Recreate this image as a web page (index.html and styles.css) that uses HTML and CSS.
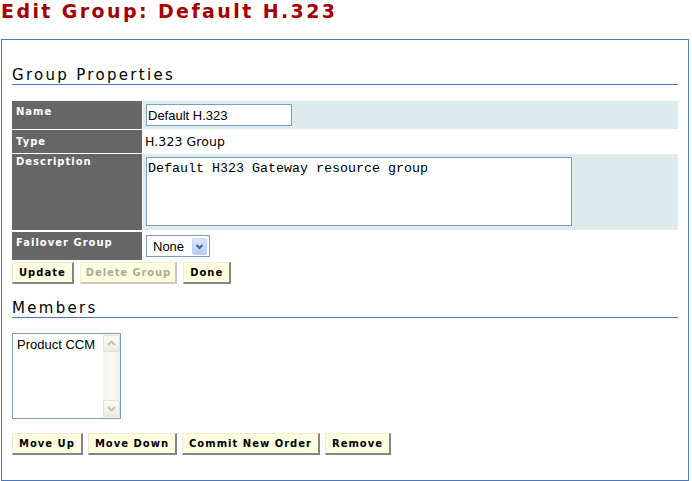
FILE: index.html
```html
<!DOCTYPE html>
<html>
<head>
<meta charset="utf-8">
<title>Edit Group</title>
<link rel="stylesheet" href="styles.css">
</head>
<body>
<h1 class="page-title">Edit Group: Default H.323</h1>
<div class="panel">
  <h2 class="section-title">Group Properties</h2>
  <div class="props">
    <div class="label l-name">Name</div>
    <div class="value tint v-name"><input class="text-input" type="text" value="Default H.323"></div>
    <div class="label l-type">Type</div>
    <div class="value v-type">H.323 Group</div>
    <div class="label l-desc">Description</div>
    <div class="value tint v-desc"><textarea class="desc-area">Default H323 Gateway resource group</textarea></div>
    <div class="label l-fail">Failover Group</div>
    <div class="value v-fail">
      <div class="dropdown">
        <span class="dropdown-text">None</span>
        <span class="drop-btn"><svg width="15" height="17" viewBox="0 0 15 17"><path d="M4.5 7 L7.5 10 L10.5 7" stroke="#4d6185" stroke-width="2" fill="none"/></svg></span>
      </div>
    </div>
  </div>
  <div class="btn-row top-btns">
    <button class="btn">Update</button>
    <button class="btn btn-disabled">Delete Group</button>
    <button class="btn">Done</button>
  </div>
  <h2 class="section-title members-title">Members</h2>
  <div class="listbox">
    <div class="list-items">
      <div class="list-item">Product CCM</div>
    </div>
    <div class="scrollbar">
      <div class="sb-btn"><svg width="15" height="15" viewBox="0 0 15 15"><path d="M4 9 L7.5 5.5 L11 9" stroke="#c6c5bb" stroke-width="2" fill="none"/></svg></div>
      <div class="sb-track"></div>
      <div class="sb-btn"><svg width="15" height="15" viewBox="0 0 15 15"><path d="M4 6 L7.5 9.5 L11 6" stroke="#c6c5bb" stroke-width="2" fill="none"/></svg></div>
    </div>
  </div>
  <div class="btn-row bottom-btns">
    <button class="btn">Move Up</button>
    <button class="btn">Move Down</button>
    <button class="btn">Commit New Order</button>
    <button class="btn">Remove</button>
  </div>
</div>
</body>
</html>
```
FILE: styles.css
```css
html, body {
  margin: 0;
  padding: 0;
  background: #ffffff;
}
body {
  font-family: "DejaVu Sans", Verdana, sans-serif;
  color: #000;
}
.page-title {
  margin: 0 0 17px 0;
  padding-left: 1px;
  font-family: "DejaVu Sans", Verdana, sans-serif;
  font-weight: bold;
  font-size: 19px;
  line-height: 22px;
  letter-spacing: 2.4px;
  color: #a50000;
}
.panel {
  box-sizing: border-box;
  width: 688px;
  margin-left: 1px;
  border: 1px solid #4a78bc;
  padding: 0 10px 25px 10px;
}
.section-title {
  margin: 26px 0 16px 0;
  font-weight: normal;
  font-size: 15px;
  line-height: 18px;
  letter-spacing: 2.3px;
  border-bottom: 1px solid #4a78bc;
  color: #000;
}
.members-title {
  margin: 15px 0 15px 0;
}
.props {
  display: grid;
  grid-template-columns: 130px 1fr;
  column-gap: 1px;
  row-gap: 1px;
}
.label {
  background: #666666;
  color: #ffffff;
  font-weight: bold;
  font-size: 10px;
  line-height: 12px;
  letter-spacing: 1px;
  padding-left: 4px;
}
.l-name { padding-top: 5px; }
.l-type { padding-top: 6px; }
.l-desc { padding-top: 2px; }
.l-fail { padding-top: 5px; margin-top: 1px; }
.value {
  padding-left: 3px;
}
.tint {
  background: #dcecec;
}
.v-name {
  padding-top: 3px;
  padding-bottom: 3px;
}
.v-type {
  padding: 4px 0 4px 2px;
  font-size: 12.5px;
  line-height: 15px;
  letter-spacing: 0.1px;
}
.v-desc {
  padding-top: 3px;
  padding-bottom: 4px;
}
.v-fail {
  padding-top: 3px;
  padding-bottom: 3px;
  margin-top: 1px;
}
.text-input {
  box-sizing: border-box;
  display: block;
  width: 146px;
  height: 22px;
  margin: 0;
  border: 1px solid #7f9db9;
  padding: 0 1px;
  font-family: "Liberation Sans", Arial, sans-serif;
  font-size: 13px;
  color: #000;
  background: #fff;
  outline: none;
}
.desc-area {
  box-sizing: border-box;
  display: block;
  width: 426px;
  height: 69px;
  margin: 0;
  border: 1px solid #7f9db9;
  padding: 3px 1px;
  font-family: "Liberation Mono", "Courier New", monospace;
  font-size: 13.33px;
  line-height: 15px;
  color: #000;
  background: #fff;
  resize: none;
  overflow: hidden;
  outline: none;
}
.dropdown {
  box-sizing: border-box;
  width: 64px;
  height: 22px;
  border: 1px solid #7f9db9;
  background: #fff;
  display: flex;
  align-items: center;
  justify-content: space-between;
  padding: 0 2px 0 6px;
  font-family: "Liberation Sans", Arial, sans-serif;
  font-size: 13px;
}
.drop-btn {
  display: block;
  box-sizing: border-box;
  width: 15px;
  height: 17px;
  border: 1px solid #c3d3fd;
  border-radius: 2px;
  background: linear-gradient(#dce6fc, #b7c9f5);
}
.drop-btn svg {
  display: block;
  margin: -1px;
}
.btn-row {
  display: flex;
  gap: 6px;
}
.top-btns {
  margin-top: 2px;
}
.bottom-btns {
  margin-top: 14px;
  gap: 5px;
}
.btn {
  box-sizing: border-box;
  height: 22px;
  margin: 0;
  padding: 4px 6px 3px 6px;
  background: #ffffe0;
  border-style: solid;
  border-width: 1px 2px 2px 1px;
  border-color: #ecebd6 #858585 #858585 #ecebd6;
  font-family: "DejaVu Sans", Verdana, sans-serif;
  font-weight: bold;
  font-size: 10px;
  line-height: 12px;
  letter-spacing: 1px;
  color: #000;
  white-space: nowrap;
}
.btn-disabled {
  padding-left: 5px;
  padding-right: 4px;
  letter-spacing: 0.9px;
  color: #a9a9a0;
  border-color: #efeedb #c9c9c2 #c9c9c2 #efeedb;
}
.listbox {
  box-sizing: border-box;
  width: 109px;
  height: 86px;
  border: 1px solid #7f9db9;
  background: #fff;
  display: flex;
}
.list-items {
  flex: 1;
  padding: 3px 0 0 4px;
  font-family: "Liberation Sans", Arial, sans-serif;
  font-size: 13px;
  line-height: 15px;
}
.scrollbar {
  width: 17px;
  display: flex;
  flex-direction: column;
  background: linear-gradient(90deg, #f3f2ec, #fbfbf8 50%, #efeee7);
  padding: 1px 0;
  box-sizing: border-box;
}
.sb-btn {
  box-sizing: border-box;
  width: 17px;
  height: 17px;
  border: 1px solid #e4e2d8;
  border-radius: 2px;
  background: linear-gradient(#fbfbf7, #ecebe3);
}
.sb-btn svg {
  display: block;
  margin: 0;
}
.sb-track {
  flex: 1;
}
```
